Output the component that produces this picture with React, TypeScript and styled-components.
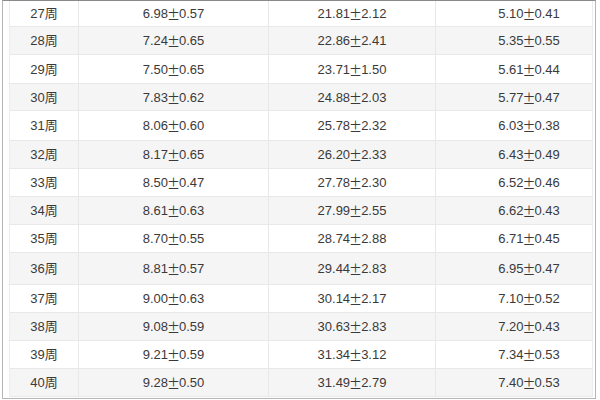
import * as React from "react";
import styled, { createGlobalStyle } from "styled-components";

const GlobalStyle = createGlobalStyle`
  html, body {
    margin: 0;
    padding: 0;
    background: #ffffff;
  }
  body {
    font-family: "Liberation Sans", "Noto Sans CJK SC", sans-serif;
    color: #3a3a3a;
  }
`;

const Frame = styled.div`
  width: 592px;
  height: 397px;
  margin-left: 2px;
  border-top: solid 1px #8a8a8a;
  border-left: solid 1px #b5b5b5;
  border-right: solid 1px #b5b5b5;
  border-bottom: solid 1px #b5b5b5;
  background: #ffffff;
  overflow: hidden;
`;

const Table = styled.div`
  margin-left: 6px;
  margin-right: 2px;
  border-left: solid 1px #ececec;
  border-right: solid 1px #ececec;
  display: flex;
  flex-direction: column;
`;

const Row = styled.div<{ $height: number; $striped: boolean }>`
  display: grid;
  grid-template-columns: 69px 190px 167px 1fr;
  height: ${props => props.$height}px;
  background: ${props => (props.$striped ? "#f5f5f5" : "#ffffff")};
  border-bottom: solid 1px #e8e8e8;
  box-sizing: border-box;
`;

const Cell = styled.div<{ $shift?: number }>`
  display: flex;
  align-items: center;
  justify-content: center;
  padding-left: ${props => props.$shift || 0}px;
  border-right: solid 1px #e8e8e8;
  font-size: 13px;
  line-height: 1;
  white-space: nowrap;
  &:last-child {
    border-right: 0;
  }
`;

const Sign = styled.span`
  font-family: "Noto Sans CJK SC", sans-serif;
  font-size: 13px;
  margin: 0 -1px;
`;

interface Week {
  week: number;
  a: string;
  b: string;
  c: string;
  height: number;
}

const weeks: Week[] = [
  { week: 27, a: "6.98|0.57", b: "21.81|2.12", c: "5.10|0.41", height: 26 },
  { week: 28, a: "7.24|0.65", b: "22.86|2.41", c: "5.35|0.55", height: 28 },
  { week: 29, a: "7.50|0.65", b: "23.71|1.50", c: "5.61|0.44", height: 29 },
  { week: 30, a: "7.83|0.62", b: "24.88|2.03", c: "5.77|0.47", height: 27 },
  { week: 31, a: "8.06|0.60", b: "25.78|2.32", c: "6.03|0.38", height: 30 },
  { week: 32, a: "8.17|0.65", b: "26.20|2.33", c: "6.43|0.49", height: 28 },
  { week: 33, a: "8.50|0.47", b: "27.78|2.30", c: "6.52|0.46", height: 28 },
  { week: 34, a: "8.61|0.63", b: "27.99|2.55", c: "6.62|0.43", height: 28 },
  { week: 35, a: "8.70|0.55", b: "28.74|2.88", c: "6.71|0.45", height: 28 },
  { week: 36, a: "8.81|0.57", b: "29.44|2.83", c: "6.95|0.47", height: 32 },
  { week: 37, a: "9.00|0.63", b: "30.14|2.17", c: "7.10|0.52", height: 28 },
  { week: 38, a: "9.08|0.59", b: "30.63|2.83", c: "7.20|0.43", height: 28 },
  { week: 39, a: "9.21|0.59", b: "31.34|3.12", c: "7.34|0.53", height: 28 },
  { week: 40, a: "9.28|0.50", b: "31.49|2.79", c: "7.40|0.53", height: 28 }
];

const Value = ({ text }: { text: string }) => {
  const [mean, sd] = text.split("|");
  return (
    <>
      {mean}
      <Sign>±</Sign>
      {sd}
    </>
  );
};

export default function App() {
  return (
    <>
      <GlobalStyle />
      <Frame>
        <Table>
          {weeks.map((w, i) => (
            <Row key={w.week} $height={w.height} $striped={i % 2 === 1}>
              <Cell>{w.week}周</Cell>
              <Cell>
                <Value text={w.a} />
              </Cell>
              <Cell>
                <Value text={w.b} />
              </Cell>
              <Cell $shift={30}>
                <Value text={w.c} />
              </Cell>
            </Row>
          ))}
        </Table>
      </Frame>
    </>
  );
}
